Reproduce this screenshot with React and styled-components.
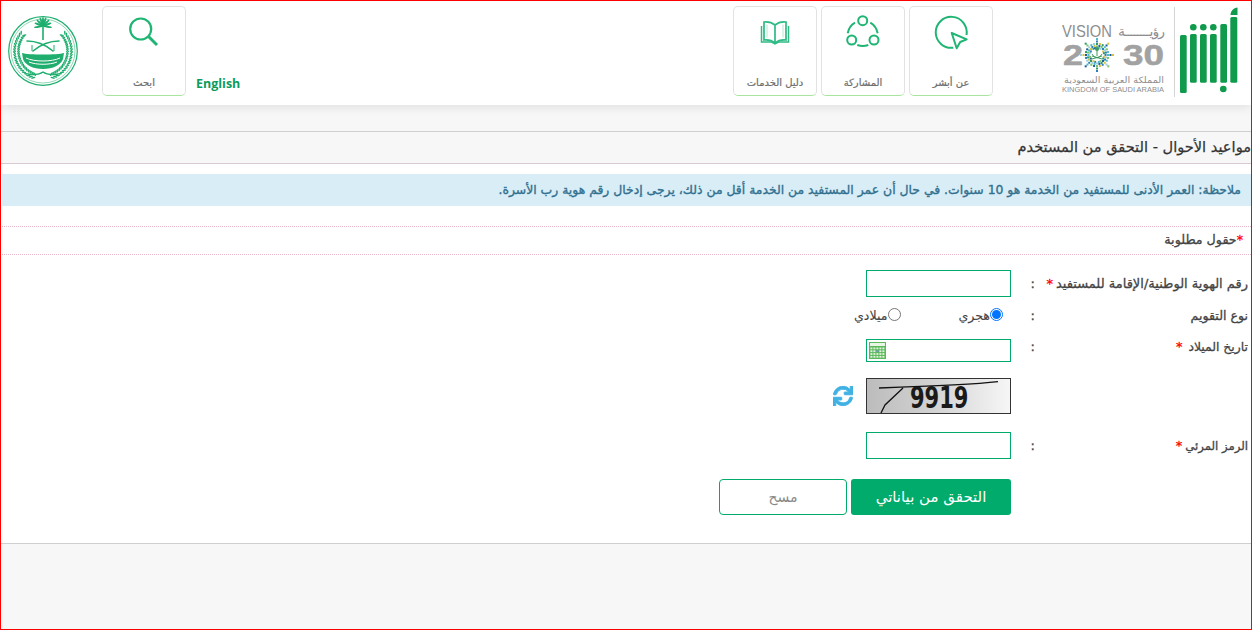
import React from 'react';
import styled, { createGlobalStyle } from 'styled-components';
import { FaSync } from 'react-icons/fa';

const GREEN = '#00ab6b';
const FONT = '"DejaVu Sans", "Noto Sans", sans-serif';

const Global = createGlobalStyle`
  html, body { margin: 0; padding: 0; background: #fff; }
  body { font-family: ${FONT}; }
  * { box-sizing: border-box; }
`;

const Frame = styled.div`
  width: 1252px;
  height: 630px;
  border: 1px solid #f00;
  background: #f7f7f7;
  display: flex;
  flex-direction: column;
  overflow: hidden;
`;
const Header = styled.header`
  height: 104px;
  background: #fff;
  box-shadow: 0 2px 10px rgba(0,0,0,.1);
  display: flex;
  justify-content: space-between;
  align-items: flex-start;
  padding: 5px 13px 0 7px;
  flex-shrink: 0;
  position: relative;
`;
const Side = styled.div`
  display: flex;
  align-items: flex-start;
  gap: ${p => p.$gap || 0}px;
`;
const Emblem = styled.svg`
  width: 70px;
  height: 70px;
  margin-top: 10px;
  margin-right: 24px;
`;
const Lang = styled.a`
  color: #0b9c5d;
  font: 700 12.5px "Open Sans", sans-serif;
  margin: 69px 0 0 10px;
`;
const NavCard = styled.div`
  width: 84px;
  height: 90px;
  background: #fff;
  border: 1px solid #e2e2e2;
  border-bottom-color: #a8e6a0;
  border-radius: 5px;
  display: flex;
  flex-direction: column;
  align-items: center;
  direction: rtl;
  color: #6d6d6d;
  font-size: 10px;
  -webkit-text-stroke: .2px #6d6d6d;
  padding-top: 8px;
`;
const NavIcon = styled.svg`
  width: 40px;
  height: 40px;
  fill: none;
  stroke: #1fb573;
  stroke-width: 2;
`;
const NavLabel = styled.span`
  margin-top: 22px;
`;
const Logos = styled.div`
  display: flex;
  align-items: flex-start;
  margin-left: 69px;
`;
const Vision = styled.svg`
  width: 106px;
  height: 72px;
  margin-top: 16px;
`;
const Divider = styled.div`
  width: 1px;
  height: 90px;
  background: #d5d5d5;
  margin: 1px 3px 0 6px;
`;
const Absher = styled.svg`
  width: 60px;
  height: 90px;
`;
const Main = styled.main`
  margin-top: 26px;
  background: #fff;
  border-top: 1px solid #cfcfcf;
  border-bottom: 1px solid #cfcfcf;
  height: 413px;
  direction: rtl;
  color: #3a3a3a;
`;
const Title = styled.h1`
  margin: 0;
  height: 32px;
  background: #f7f7f7;
  border-bottom: 1px solid #d9c9d2;
  font-size: 14.6px;
  font-weight: 400;
  -webkit-text-stroke: .25px #333;
  line-height: 30px;
  color: #333;
  white-space: nowrap;
`;
const Note = styled.div`
  margin: 10px 0 0 1px;
  height: 32px;
  background: #d9edf7;
  color: #31708f;
  font-size: 12.4px;
  font-weight: 400;
  -webkit-text-stroke: .35px #31708f;
  line-height: 31px;
  padding-right: 10px;
  white-space: nowrap;
`;
const Required = styled.div`
  margin: 20px 0 0 1px;
  height: 29px;
  border-top: 1px dotted #e9b9c9;
  border-bottom: 1px dotted #e9b9c9;
  font-size: 12.7px;
  -webkit-text-stroke: .3px #444;
  line-height: 26px;
  padding-right: 8px;
  color: #444;
`;
const Star = styled.span`
  color: #f00;
  -webkit-text-stroke: .3px #f00;
`;
const Form = styled.div`
  margin-top: 15px;
  padding-right: 3px;
  display: flex;
  flex-direction: column;
`;
const Row = styled.div`
  display: grid;
  grid-template-columns: 208px 29px 1fr;
  align-items: ${p => p.$top ? 'start' : 'center'};
  height: ${p => p.$h}px;
  margin-top: ${p => p.$mt || 0}px;
  font-size: 13px;
  -webkit-text-stroke: .3px #444;
  color: #444;
`;
const Label = styled.div`
  white-space: nowrap;
  font-size: ${p => p.$fs || 13}px;
`;
const StarLabel = styled(Star)`
  margin-right: ${p => p.$gap || 3}px;
  font-size: 13px;
`;
const Colon = styled.div`
  padding-right: 5px;
`;
const Input = styled.div`
  width: 145px;
  height: ${p => p.$h || 27}px;
  border: 1px solid ${GREEN};
  background: #fff;
  display: flex;
  align-items: center;
`;
const Radios = styled.div`
  display: flex;
  width: 157px;
  justify-content: space-between;
  padding-right: 8px;
`;
const RadioItem = styled.label`
  display: flex;
  align-items: flex-start;
  font-size: 12.6px;
  -webkit-text-stroke: .1px #444;
  color: #444;
`;
const RadioDot = styled.span`
  width: 13px;
  height: 13px;
  border-radius: 50%;
  background: #fff;
  border: 1px solid ${p => p.$on ? '#0075ff' : '#767676'};
  display: flex;
  align-items: center;
  justify-content: center;
  &::after {
    content: '';
    width: 9px;
    height: 9px;
    border-radius: 50%;
    background: ${p => p.$on ? '#0075ff' : 'transparent'};
  }
`;
const CalIcon = styled.svg`
  width: 17px;
  height: 17px;
  margin-right: 124px;
`;
const CaptchaWrap = styled.div`
  display: flex;
  align-items: center;
  gap: 13px;
  color: #3fb1e3;
  -webkit-text-stroke: 0;
`;
const Captcha = styled.div`
  width: 145px;
  height: 36px;
  border: 1px solid #333;
  background: linear-gradient(90deg, #bcbcbc, #d2d2d2 45%, #f6f6f6);
  position: relative;
  overflow: hidden;
  direction: ltr;
`;
const CaptchaText = styled.span`
  position: absolute;
  left: 43px;
  top: 2px;
  font: 700 30px/34px "DejaVu Sans", sans-serif;
  color: #1a1a1a;
  transform: scaleX(.7);
  transform-origin: left center;
`;
const CaptchaLines = styled.svg`
  position: absolute;
  left: 0;
  top: 0;
  width: 143px;
  height: 34px;
`;
const Actions = styled.div`
  display: flex;
  gap: 4px;
  margin-right: 237px;
  margin-top: 20px;
`;
const Primary = styled.button`
  width: 160px;
  height: 36px;
  border: 0;
  border-radius: 3px;
  background: ${GREEN};
  color: #fff;
  font: 400 15px ${FONT};
`;
const Secondary = styled.button`
  width: 128px;
  height: 36px;
  border: 1px solid ${GREEN};
  border-radius: 4px;
  background: #fff;
  color: #888;
  font: 400 14px ${FONT};
`;

const leaves = [];
for (let i = 0; i < 21; i++) {
  const deg = 110 + i * 5.5;
  const a = deg * Math.PI / 180;
  [24.5, 28.5].forEach(rad => {
    leaves.push([35 + rad * Math.cos(a), 35 + rad * Math.sin(a), deg + (rad > 25 ? 55 : 125)]);
  });
}
const fronds = [-70, -45, -20, 0, 20, 45, 70, 100, -100];

function EmblemArt() {
  return (
    <Emblem viewBox="0 0 70 70">
      <circle cx="35" cy="35" r="34.300" fill="none" stroke="#1fae6e" strokeWidth="1.200" />
      <circle cx="35" cy="35" r="32" fill="none" stroke="#1fae6e" strokeWidth=".5" />
      <g fill="#1fae6e">
        {leaves.map(([x, y, r], i) => (
          <g key={i}>
            <ellipse cx={x} cy={y} rx="2.300" ry=".8" transform={`rotate(${r} ${x} ${y})`} />
            <ellipse cx={70 - x} cy={y} rx="2.300" ry=".8" transform={`rotate(${-r} ${70 - x} ${y})`} />
          </g>
        ))}
        <rect x="34.200" y="10" width="1.600" height="14" />
        {fronds.map(r => (
          <ellipse key={r} cx="35" cy="5.500" rx="1" ry="4.500" transform={`rotate(${r} 35 10)`} />
        ))}
        <path d="M14 37c6 2 36 2 42 0l-1 6c-2 6-10 10-20 10s-18-4-20-10z" />
      </g>
      <path d="M19 25c10 0 20 5 26 10M51 25c-10 0-20 5-26 10" fill="none" stroke="#1fae6e" strokeWidth="1.600" strokeLinecap="round" />
      <path d="M24 29v6M46 29v6" stroke="#1fae6e" strokeWidth="1" />
      <path d="M18 42c8 4 26 4 34 0M21 46c7 3 21 3 28 0" fill="none" stroke="#fff" strokeWidth="1" />
      <path d="M20 58c6 1 11 1 15-2c4 3 9 3 15 2" fill="none" stroke="#1fae6e" strokeWidth="1.300" />
    </Emblem>
  );
}

const dots = [];
const cols = ['#2f7fb8', '#7cc36a', '#d6c23f', '#4fb9c9', '#2e9a66', '#9ad0e0', '#1d5c9c'];
for (let r = 0; r < 4; r++) {
  for (let i = 0; i < 24; i++) {
    const a = i * Math.PI / 12;
    const star = i % 3 === 0 ? 1 : .84;
    if (r === 3 && i % 3 !== 0) continue;
    const rad = (8.5 + r * 2.5) * star;
    dots.push([35 + rad * Math.cos(a), 33 + rad * Math.sin(a), cols[(i * 2 + r * 3) % 7]]);
  }
}

function VisionArt() {
  const LS = 'Liberation Sans, sans-serif';
  const DV = 'DejaVu Sans, sans-serif';
  return (
    <Vision viewBox="0 0 106 72">
      <text x="0" y="15" fontFamily={LS} fontSize="16.500" fill="#8e8e8e" textLength="50" lengthAdjust="spacingAndGlyphs">VISION</text>
      <text x="103" y="14" direction="rtl" fontFamily={DV} fontSize="14" fill="#8e8e8e" textLength="47" lengthAdjust="spacing">رؤيــــــــة</text>
      <text transform="translate(1 43) scale(1.22 1)" fontFamily={LS} fontWeight="700" fontSize="29.500" fill="#a2a2a2" stroke="#a2a2a2" strokeWidth=".5">2</text>
      <text transform="translate(61 43) scale(1.25 1)" fontFamily={LS} fontWeight="700" fontSize="29.500" fill="#a2a2a2" stroke="#a2a2a2" strokeWidth=".5">30</text>
      {dots.map(([x, y, c], i) => <rect key={i} x={x - 1} y={y - 1} width="2" height="2" fill={c} />)}
      <path d="M35 26v8M30 32c3 5 7 5 10 0M30 37l10-3M40 37l-10-3" stroke="#3d9a5f" strokeWidth="1" fill="none" />
      <circle cx="35" cy="27" r="2" fill="#3d9a5f" />
      <text x="102" y="61" direction="rtl" fontFamily={DV} fontSize="8.600" fill="#8e8e8e" textLength="100" lengthAdjust="spacingAndGlyphs">المملكة العربية السعودية</text>
      <text x="0" y="70" fontFamily={LS} fontSize="7.400" fill="#8e8e8e" textLength="102" lengthAdjust="spacingAndGlyphs">KINGDOM OF SAUDI ARABIA</text>
    </Vision>
  );
}

function AbsherArt() {
  return (
    <Absher viewBox="0 0 60 90">
      <g fill="#0f9a4c">
        <rect x="2" y="29" width="6.700" height="58" rx="1.500" />
        <rect x="12" y="28" width="6.700" height="48.700" rx="1.500" />
        <rect x="22" y="28" width="6.700" height="48.700" rx="1.500" />
        <rect x="32" y="28" width="6.700" height="48.700" rx="1.500" />
        <rect x="42.300" y="18" width="6.700" height="58.700" rx="1.500" />
        <rect x="52.300" y="11" width="7" height="65.700" rx="1.500" />
        <circle cx="15.300" cy="21.300" r="3.300" />
        <circle cx="25.300" cy="21.300" r="3.300" />
        <circle cx="35.300" cy="21.300" r="3.300" />
        <circle cx="45.300" cy="83" r="3.300" />
        <path d="M52.500 9c0-4 3-7 7-7.500V9z" />
      </g>
    </Absher>
  );
}

const Card = ({ label, children }) => (
  <NavCard>
    <NavIcon viewBox="0 0 40 40">{children}</NavIcon>
    <NavLabel>{label}</NavLabel>
  </NavCard>
);

export default function App() {
  return (
    <>
      <Global />
      <Frame>
        <Header>
          <Side>
            <EmblemArt />
            <Card label="ابحث">
              <circle cx="16.700" cy="14" r="10.500" strokeWidth="2.200" />
              <path d="M24.500 21.500l8.500 8.500" strokeWidth="3" />
            </Card>
            <Lang>English</Lang>
          </Side>
          <Side>
            <Side $gap={4}>
              <Card label="دليل الخدمات">
                <path d="M20 10c-3-2.500-7-3.500-11-3v18c4-.5 8 .5 11 3 3-2.500 7-3.500 11-3V7c-4-.5-8 .5-11 3zM20 10v18" strokeWidth="1.700" stroke="#2fbb85" />
                <path d="M6.500 11v16h10l3.500 2 3.500-2h10V11" strokeWidth="1.500" stroke="#2fbb85" />
                <path d="M12 9.500v13M28 9.500v13" strokeWidth=".8" stroke="#a5e0c8" />
              </Card>
              <Card label="المشاركة">
                <circle cx="19.700" cy="5.700" r="4.500" />
                <circle cx="8.700" cy="25" r="4.500" />
                <circle cx="31" cy="25" r="4.500" />
                <path d="M12 7.700C8 10 5.500 14 4.700 18.300M27.300 7.700c4 2.300 6.500 6.300 7.400 10.600M14.300 30c3.500 1.300 7.500 1.300 11 0" />
              </Card>
              <Card label="عن أبشر">
                <path d="M22.300 32.700A15.500 15.500 0 1 1 35.500 20" />
                <path d="M20.700 18l15 6.300-6.500 2.700-3.500 6.300z" strokeLinejoin="round" />
              </Card>
            </Side>
            <Logos>
              <VisionArt />
              <Divider />
              <AbsherArt />
            </Logos>
          </Side>
        </Header>
        <Main>
          <Title>مواعيد الأحوال - التحقق من المستخدم</Title>
          <Note>ملاحظة: العمر الأدنى للمستفيد من الخدمة هو 10 سنوات. في حال أن عمر المستفيد من الخدمة أقل من ذلك، يرجى إدخال رقم هوية رب الأسرة.</Note>
          <Required><Star>*</Star>حقول مطلوبة</Required>
          <Form>
            <Row $h={27}>
              <Label>رقم الهوية الوطنية/الإقامة للمستفيد<StarLabel>*</StarLabel></Label>
              <Colon>:</Colon>
              <Input />
            </Row>
            <Row $h={18} $mt={9}>
              <Label $fs={12.6}>نوع التقويم</Label>
              <Colon>:</Colon>
              <Radios>
                <RadioItem><RadioDot $on />هجري</RadioItem>
                <RadioItem><RadioDot />ميلادي</RadioItem>
              </Radios>
            </Row>
            <Row $h={23} $mt={15} $top>
              <Label $fs={12.4}>تاريخ الميلاد <StarLabel $gap={2}>*</StarLabel></Label>
              <Colon>:</Colon>
              <Input $h={23}>
                <CalIcon viewBox="0 0 17 17">
                  <rect width="17" height="17" fill="#5cb85c" />
                  <rect x="1" y="1" width="15" height="3" fill="#e9f5e3" />
                  {[0, 1, 2, 3].map(r => [0, 1, 2, 3, 4].map(c => (
                    <rect key={`${r}${c}`} x={1.400 + c * 3} y={5.500 + r * 2.800} width="2" height="1.800" fill={r === 1 && c === 2 ? '#7f8fe8' : '#e3f3dc'} />
                  )))}
                </CalIcon>
              </Input>
            </Row>
            <Row $h={36} $mt={16}>
              <div />
              <div />
              <CaptchaWrap>
                <Captcha>
                  <CaptchaText>9919</CaptchaText>
                  <CaptchaLines viewBox="0 0 143 34">
                    <path d="M12 9c30-1 90-3 119-6.300M36 9L18 26l-4 8" fill="none" stroke="#111" strokeWidth="1.300" />
                  </CaptchaLines>
                </Captcha>
                <FaSync size={20} stroke="currentColor" strokeWidth={24} />
              </CaptchaWrap>
            </Row>
            <Row $h={27} $mt={18}>
              <Label $fs={11.7}>الرمز المرئي<StarLabel>*</StarLabel></Label>
              <Colon>:</Colon>
              <Input />
            </Row>
            <Actions>
              <Primary>التحقق من بياناتي</Primary>
              <Secondary>مسح</Secondary>
            </Actions>
          </Form>
        </Main>
      </Frame>
    </>
  );
}
